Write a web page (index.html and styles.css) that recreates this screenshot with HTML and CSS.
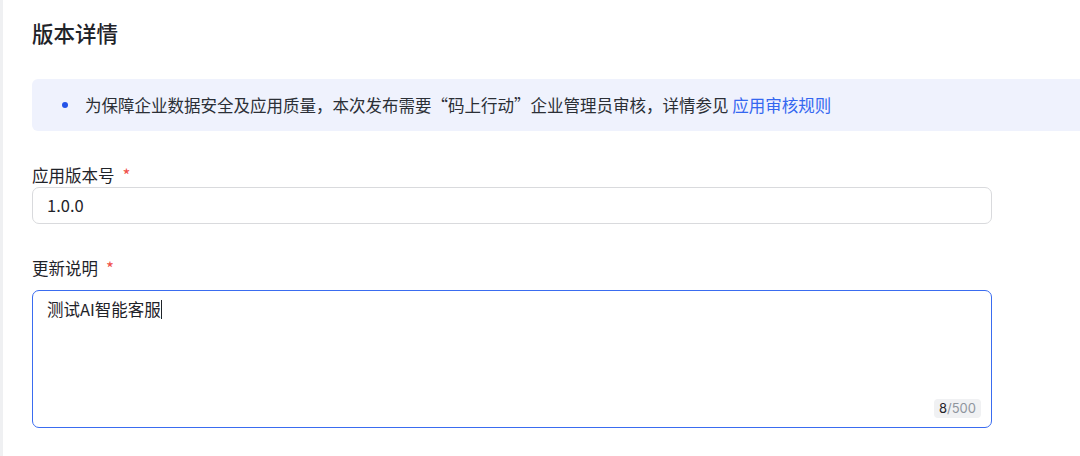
FILE: index.html
```html
<!DOCTYPE html>
<html lang="zh-CN">
<head>
<meta charset="utf-8">
<title>版本详情</title>
<link rel="stylesheet" href="styles.css">
</head>
<body>
<div class="page">
  <h1 class="title">版本详情</h1>
  <div class="alert">
    <span class="dot"></span>
    <span class="alert-text">为保障企业数据安全及应用质量，本次发布需要“码上行动”企业管理员审核，详情参见 <a class="link" href="#">应用审核规则</a></span>
  </div>
  <div class="field field-version">
    <div class="label">应用版本号<span class="req">*</span></div>
    <div class="input">1.0.0</div>
  </div>
  <div class="field field-notes">
    <div class="label">更新说明<span class="req">*</span></div>
    <div class="textarea">
      <div class="ta-text">测试AI智能客服<span class="caret"></span></div>
      <div class="counter"><span class="count-cur">8</span>/500</div>
    </div>
  </div>
</div>
</body>
</html>
```

FILE: styles.css
```css
html, body {
  margin: 0;
  padding: 0;
  background: #ffffff;
  overflow: hidden;
}
body {
  font-family: "Noto Sans CJK SC", "Noto Sans", sans-serif;
  color: #1f2329;
}
.page {
  border-left: 3px solid #eff0f2;
  padding-left: 29px;
  width: 1100px;
  height: 456px;
  box-sizing: border-box;
}
.title {
  margin: 0;
  padding-top: 18px;
  font-size: 21.5px;
  line-height: 30px;
  font-weight: 500;
  color: #1f2329;
}
.alert {
  margin-top: 31px;
  height: 52px;
  background: #eff2fd;
  border-radius: 6px;
  display: flex;
  align-items: center;
  padding-left: 30px;
  box-sizing: border-box;
}
.dot {
  width: 6px;
  height: 6px;
  border-radius: 50%;
  background: #2453e8;
  flex: none;
  margin-right: 17px;
}
.alert-text {
  font-size: 16.5px;
  line-height: 24px;
  color: #2b2f36;
  white-space: nowrap;
}
.link {
  color: #3467f0;
  text-decoration: none;
}
.field {
  width: 960px;
}
.field-version {
  margin-top: 32px;
}
.field-notes {
  margin-top: 32px;
}
.label {
  font-size: 16.5px;
  line-height: 24px;
  color: #1f2329;
  font-weight: 400;
}
.req {
  color: #f0504a;
  margin-left: 8px;
  font-size: 17px;
}
.field-version .label {
  height: 24px;
}
.field-notes .label {
  margin-bottom: 10px;
}
.input {
  height: 37px;
  box-sizing: border-box;
  border: 1px solid #d9dadd;
  border-radius: 7px;
  padding: 0 14px;
  font-size: 16.5px;
  line-height: 35px;
  color: #1f2329;
}
.textarea {
  position: relative;
  height: 138px;
  box-sizing: border-box;
  border: 1px solid #3a6cf0;
  border-radius: 7px;
  padding: 6px 14px;
}
.ta-text {
  font-size: 16.5px;
  line-height: 24px;
  color: #1f2329;
}
.caret {
  display: inline-block;
  width: 1px;
  height: 19px;
  background: #1f2329;
  vertical-align: -3px;
}
.counter {
  position: absolute;
  right: 10px;
  bottom: 9px;
  height: 19px;
  padding: 0 5px;
  background: #f0f1f3;
  border-radius: 4px;
  font-family: Inter, "Noto Sans", sans-serif;
  font-size: 13px;
  line-height: 19px;
  color: #8f959e;
}
.count-cur {
  color: #1f2329;
}
```
